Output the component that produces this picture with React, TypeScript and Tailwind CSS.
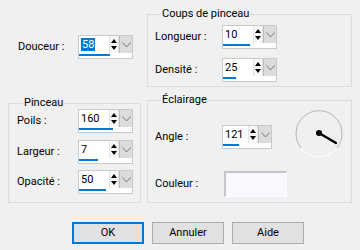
import type { ReactNode } from 'react';

type SpinProps = { value: number; max: number; narrow?: boolean; selected?: boolean };

function Spin({ value, max, narrow, selected }: SpinProps) {
  const pct = Math.min(100, (value / max) * 100);
  return (
    <div className={`${narrow ? 'w-[50px]' : 'w-[55px]'} h-[24px] flex flex-col border border-[#c9c9c9] bg-white`}>
      <div className="flex h-[17px]">
        <div className="flex-1 pl-[2px] pt-[1px] leading-[15px] text-black">
          {selected ? <span className="bg-[#0078d7] text-white px-[1px]">{value}</span> : value}
        </div>
        <div className="w-[10px] flex flex-col items-center justify-center gap-[3px] bg-[#f7f7f7] border-x border-[#e3e3e3]">
          <svg width="6" height="4" viewBox="0 0 6 4"><path d="M0 4 L3 0 L6 4 Z" fill="#000" /></svg>
          <svg width="6" height="4" viewBox="0 0 6 4"><path d="M0 0 L6 0 L3 4 Z" fill="#000" /></svg>
        </div>
        <div className="w-[13px] bg-[#dcdcdc] border-l border-[#bdbdbd] flex items-center justify-center">
          <svg width="9" height="6" viewBox="0 0 9 6"><path d="M0.5 0.5 L4.5 5 L8.5 0.5" fill="none" stroke="#7a7a7a" strokeWidth="1" /></svg>
        </div>
      </div>
      <div className="flex-1 pt-[1px]">
        <div className="h-[2px] bg-[#0078d7]" style={{ width: `${pct}%` }} />
      </div>
    </div>
  );
}

function Row({ label, w, children }: { label: string; w: string; children: ReactNode }) {
  return (
    <div className="flex items-center">
      <div className={`${w} shrink-0`}>{label}</div>
      {children}
    </div>
  );
}

function Group({ title, className, children }: { title: string; className: string; children: ReactNode }) {
  return (
    <fieldset className={`border border-[#dcdcdc] ${className}`}>
      <legend className="ml-[6px] px-[1px] leading-[12px]">{title}</legend>
      {children}
    </fieldset>
  );
}

function Dial() {
  return (
    <svg width="48" height="48" viewBox="0 0 48 48">
      <path d="M6 38 A23 23 0 1 1 42 38" fill="none" stroke="#b4b4b4" strokeWidth="1" />
      <path d="M6 38 A23 23 0 0 0 42 38" fill="none" stroke="#ffffff" strokeWidth="1.2" />
      <line x1="24" y1="23" x2="41" y2="33" stroke="#000" strokeWidth="2.4" strokeLinecap="round" />
      <circle cx="24" cy="23" r="3" fill="#000" />
    </svg>
  );
}

function Button({ label, def }: { label: string; def?: boolean }) {
  return (
    <button
      className={`w-[72px] h-[22px] bg-[#e1e1e1] text-black leading-[18px] ${def ? 'border-2 border-[#0078d7]' : 'border border-[#adadad]'}`}
    >
      {label}
    </button>
  );
}

export default function App() {
  return (
    <div className="w-[360px] h-[250px] bg-[#f0f0f0] text-[11px] text-black font-['Roboto','Liberation_Sans',sans-serif] overflow-hidden">
      <div className="flex">
        <div className="w-[147px] shrink-0 pl-[18px] pt-[35px]">
          <Row label="Douceur :" w="w-[60px]">
            <Spin value={58} max={100} selected />
          </Row>
        </div>
        <Group title="Coups de pinceau" className="mt-[8px] w-[205px] h-[79px] pl-[7px] pt-[5px] flex flex-col gap-[9px]">
          <Row label="Longueur :" w="w-[67px]">
            <Spin value={10} max={20} />
          </Row>
          <Row label="Densité :" w="w-[67px]">
            <Spin value={25} max={100} />
          </Row>
        </Group>
      </div>

      <div className="flex items-start mt-[7px]">
        <Group title="Pinceau" className="ml-[8px] mt-[3px] w-[133px] h-[106px] pl-[8px]">
          <div className="flex flex-col">
            <Row label="Poils :" w="w-[61px]">
              <Spin value={160} max={250} />
            </Row>
            <div className="mt-[7px]">
              <Row label="Largeur :" w="w-[61px]">
                <Spin value={7} max={20} />
              </Row>
            </div>
            <div className="mt-[6px]">
              <Row label="Opacité :" w="w-[61px]">
                <Spin value={50} max={100} />
              </Row>
            </div>
          </div>
        </Group>
        <Group title="Éclairage" className="ml-[6px] w-[205px] h-[109px] pl-[7px]">
          <div className="flex items-start mt-[4px]">
            <div className="mt-[15px]">
              <Row label="Angle :" w="w-[67px]">
                <Spin value={121} max={360} narrow />
              </Row>
            </div>
            <div className="ml-[23px]">
              <Dial />
            </div>
          </div>
          <div className="mt-[13px] flex items-center">
            <div className="w-[69px] shrink-0">Couleur :</div>
            <div className="w-[63px] h-[26px] bg-[#f8f8ff] border-t-2 border-l-2 border-[#c6c6c6] border-b border-r border-b-white border-r-white" />
          </div>
        </Group>
      </div>

      <div className="flex gap-[8px] pl-[72px] mt-[19px]">
        <Button label="OK" def />
        <Button label="Annuler" />
        <Button label="Aide" />
      </div>
    </div>
  );
}
